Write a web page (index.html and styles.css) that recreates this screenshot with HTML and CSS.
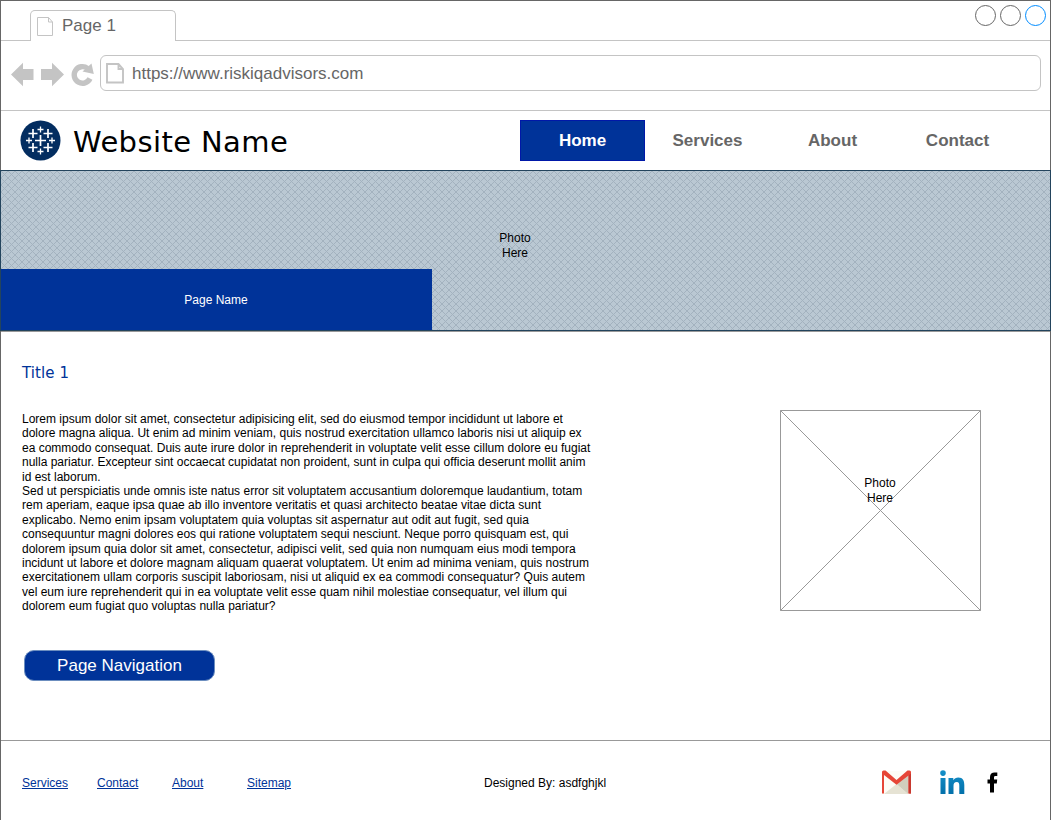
FILE: index.html
```html
<!DOCTYPE html>
<html lang="en">
<head>
<meta charset="utf-8">
<title>Page 1</title>
<link rel="stylesheet" href="styles.css">
</head>
<body>
<div class="window">
  <div class="tabs">
    <div class="tab">
      <svg class="tab-icon" width="17" height="20" viewBox="0 0 17 20"><path d="M.5.5H11.5L15.5 5V18.5H.5ZM11.5.5V5H15.5" fill="#fff" stroke="#c4c4c4"/></svg>
      <span>Page 1</span>
    </div>
    <div class="controls">
      <span class="dot"></span><span class="dot"></span><span class="dot dot-active"></span>
    </div>
  </div>
  <div class="toolbar">
    <svg class="tools" width="84" height="26" viewBox="0 0 84 26" fill="#c4c4c4">
      <path d="M0 12.500 12 .7V7H22.500V18H12V24.300Z"/>
      <path d="M53 12.500 41 .7V7H30V18H41V24.300Z"/>
      <path d="M79 16.500A8.300 8.300 0 1 1 76.500 6.300" fill="none" stroke="#c4c4c4" stroke-width="5.400"/>
      <path d="M80.500 1.500 82.800 12 71.500 9.500Z"/>
    </svg>
    <div class="address">
      <svg class="url-icon" width="18" height="21" viewBox="0 0 18 21"><path d="M1 1H12.500L17 6V19.500H1ZM12.500 1V6H17" fill="#fff" stroke="#c4c4c4" stroke-width="1.900"/></svg>
      <span class="url">https://www.riskiqadvisors.com</span>
    </div>
  </div>
  <header class="site-header">
    <svg class="logo" width="41" height="41" viewBox="0 0 41 41">
      <circle cx="20.500" cy="20.500" r="20" fill="#032d60"/>
      <g stroke="#fff" fill="none">
        <path d="M15 20.500H26M20.500 15V26M8.500 13.500H17.500M13 9V18M23.500 13.500H32.500M28 9V18M8.500 27.500H17.500M13 23V32M23.500 27.500H32.500M28 23V32" stroke-width="1.700"/>
        <path d="M17.500 9.500H23.500M20.500 6.500V12.500M17.500 31.500H23.500M20.500 28.500V34.500M6 20.500H12M9 17.500V23.500M29 20.500H35M32 17.500V23.500" stroke-width="1.300"/>
      </g>
    </svg>
    <h1 class="site-name">Website Name</h1>
    <nav class="nav">
      <a class="nav-item nav-current">Home</a><a class="nav-item">Services</a><a class="nav-item">About</a><a class="nav-item">Contact</a>
    </nav>
  </header>
  <section class="hero">
    <svg class="hatch" width="1050" height="161">
      <defs><pattern id="hatch" width="7" height="7" patternUnits="userSpaceOnUse"><path d="M-1-1 8 8M8-1-1 8" stroke="#a3b2bf" stroke-width="1"/></pattern></defs>
      <rect width="1050" height="161" fill="url(#hatch)"/>
    </svg>
    <div class="hero-photo">Photo<br>Here</div>
    <div class="page-name">Page Name</div>
  </section>
  <main class="content">
    <div class="copy">
      <h2 class="title">Title 1</h2>
      <p class="text">Lorem ipsum dolor sit amet, consectetur adipisicing elit, sed do eiusmod tempor incididunt ut labore et<br>dolore magna aliqua. Ut enim ad minim veniam, quis nostrud exercitation ullamco laboris nisi ut aliquip ex<br>ea commodo consequat. Duis aute irure dolor in reprehenderit in voluptate velit esse cillum dolore eu fugiat<br>nulla pariatur. Excepteur sint occaecat cupidatat non proident, sunt in culpa qui officia deserunt mollit anim<br>id est laborum.</p>
      <p class="text">Sed ut perspiciatis unde omnis iste natus error sit voluptatem accusantium doloremque laudantium, totam<br>rem aperiam, eaque ipsa quae ab illo inventore veritatis et quasi architecto beatae vitae dicta sunt<br>explicabo. Nemo enim ipsam voluptatem quia voluptas sit aspernatur aut odit aut fugit, sed quia<br>consequuntur magni dolores eos qui ratione voluptatem sequi nesciunt. Neque porro quisquam est, qui<br>dolorem ipsum quia dolor sit amet, consectetur, adipisci velit, sed quia non numquam eius modi tempora<br>incidunt ut labore et dolore magnam aliquam quaerat voluptatem. Ut enim ad minima veniam, quis nostrum<br>exercitationem ullam corporis suscipit laboriosam, nisi ut aliquid ex ea commodi consequatur? Quis autem<br>vel eum iure reprehenderit qui in ea voluptate velit esse quam nihil molestiae consequatur, vel illum qui<br>dolorem eum fugiat quo voluptas nulla pariatur?</p>
      <a class="button">Page Navigation</a>
    </div>
    <div class="photo">
      <svg class="photo-cross" width="201" height="201"><path d="M.5.5H200.500V200.500H.5ZL200.500 200.500M200.500.5.5 200.500" fill="none" stroke="#999"/></svg>
      <div class="photo-label">Photo<br>Here</div>
    </div>
  </main>
  <footer class="footer">
    <div class="links"><a class="link">Services</a><a class="link">Contact</a><a class="link">About</a><a class="link">Sitemap</a></div>
    <div class="credit">Designed By: asdfghjkl</div>
    <div class="social">
      <svg width="30" height="26" viewBox="0 0 30 26"><path d="M1 2H29V25H1Z" fill="#fdfcf6"/><path d="M3 25 15.500 15 27 25Z" fill="#e6e3d4"/><path d="M15.500 15 27 6V25Z" fill="#d1cebd"/><path d="M1 3Q1 1.500 2.500 1.500H4.500L15.500 11 26.500 1.500H28.500Q30 1.500 30 3V24.500H27.500V6.500L15.500 15.800 3 6V24.500H1Z" fill="#e64637"/><path d="M27.500 6.500 30 4.500V24.500H27.500Z" fill="#c8392f"/></svg>
      <svg class="linkedin" width="25" height="25" viewBox="0 0 25 25"><defs><linearGradient id="blue" x2="0" y2="1"><stop stop-color="#1690c9"/><stop offset="1" stop-color="#0270aa"/></linearGradient></defs><path d="M.5 8H5.500V24H.5ZM3 .3A2.800 2.800 0 1 1 3 5.900 2.800 2.800 0 0 1 3 .3M8.500 8H13.300V10.200C14.500 8.500 16 7.600 18.300 7.600 23 7.600 24.300 10.800 24.300 15V24H19.300V16C19.300 13.500 18.800 12 16.800 12 14.400 12 13.500 13.600 13.500 16V24H8.500Z" fill="url(#blue)"/></svg>
      <svg class="facebook" width="11" height="21" viewBox="0 0 11 21"><path d="M3 20.500V11.500H.5V7.500H3V5C3 1.800 5 .5 7.500.5H10.300V4H8.500C7.300 4 7 4.600 7 5.500V7.500H10.200L9.800 11.500H7V20.500Z"/></svg>
    </div>
  </footer>
</div>
</body>
</html>
```
FILE: styles.css
```css
* { box-sizing: border-box; }
body { margin: 0; background: #fff; font: 12px/15px "Liberation Sans", Arial, sans-serif; color: #000; overflow: hidden; }
h1, h2, p { margin: 0; font-weight: normal; }
svg { display: block; flex: none; }
.window { width: 1051px; height: 820px; border: 1px solid #666; border-bottom: 0; display: flex; flex-direction: column; white-space: nowrap; }
.tabs { height: 40px; border-bottom: 1px solid #c4c4c4; display: flex; justify-content: space-between; padding: 9px 4px 0 29px; }
.tab { width: 146px; height: 31px; border: 1px solid #c4c4c4; border-bottom: 0; border-radius: 5px 5px 0 0; background: #fff; display: flex; padding: 6px 0 0 6px; gap: 8px; font-size: 17px; line-height: 20px; color: #666; }
.tab span { margin-top: -1px; }
.controls { display: flex; gap: 4px; margin-top: -5px; }
.dot { width: 21px; height: 21px; border: 1px solid #666; border-radius: 50%; }
.dot-active { border-color: #008cff; }
.toolbar { height: 70px; border-bottom: 1px solid #c4c4c4; display: flex; padding: 14px 9px 0 10px; }
.tools { margin: 7px 5px 0 0; }
.address { width: 941px; height: 36px; border: 1px solid #c4c4c4; border-radius: 6px; display: flex; align-items: center; padding-left: 5px; gap: 8px; font-size: 17px; line-height: 20px; color: #666; }
.url { padding-top: 2px; }
.site-header { height: 59px; display: flex; padding-left: 19px; }
.logo { margin-top: 9px; }
.site-name { font: 29px/34px "DejaVu Sans", sans-serif; letter-spacing: .4px; margin: 14px 0 0 12px; width: 447px; }
.nav { display: flex; margin-top: 9px; }
.nav-item { width: 125px; height: 41px; line-height: 41px; text-align: center; font-size: 17px; font-weight: bold; color: #666; }
.nav-current { background: #003399; border: 1px solid #0018a8; line-height: 39px; color: #fff; }
.hero { width: 1051px; height: 161px; margin-left: -1px; border: 1px solid #23445d; background: #bac8d3; display: grid; grid-template: 98px 61px / 431px 1fr; }
.hero > * { position: relative; }
.hatch { grid-area: 1 / 1 / 3 / 3; width: 1049px; height: 159px; }
.hero-photo { grid-area: 1 / 1 / 2 / 3; justify-self: start; width: 60px; margin: 60px 0 0 484px; text-align: center; }
.page-name { grid-area: 2 / 1; background: #003399; color: #fff; text-align: center; line-height: 62px; height: 61px; padding-right: 1px; }
.content { height: 409px; border-top: 1px solid #999; display: flex; }
.copy { width: 779px; padding: 31px 0 0 21px; }
.title { font: 15px/20px "DejaVu Sans", sans-serif; letter-spacing: .1px; color: #003399; margin-bottom: 29px; }
.text { line-height: 14.4px; }
.button { display: block; width: 191px; height: 31px; margin: 36px 0 0 2px; border: 1px solid #6c8ebf; border-radius: 10px; background: #003399; color: #fff; font-size: 17px; line-height: 29px; text-align: center; }
.photo { display: grid; width: 201px; height: 201px; margin-top: 78px; }
.photo-cross, .photo-label { grid-area: 1 / 1; }
.photo-label { text-align: center; padding: 66px 1px 0 0; }
.footer { flex: 1; border-top: 1px solid #999; display: flex; padding: 28px 0 0 21px; }
.links { display: grid; grid-template-columns: repeat(4, 75px); width: 462px; padding-top: 7px; }
.link { color: #003399; text-decoration: underline; }
.credit { padding-top: 7px; width: 397px; }
.social { display: flex; }
.linkedin { margin: 1px 0 0 29px; }
.facebook { margin: 3px 0 0 22px; }
```
